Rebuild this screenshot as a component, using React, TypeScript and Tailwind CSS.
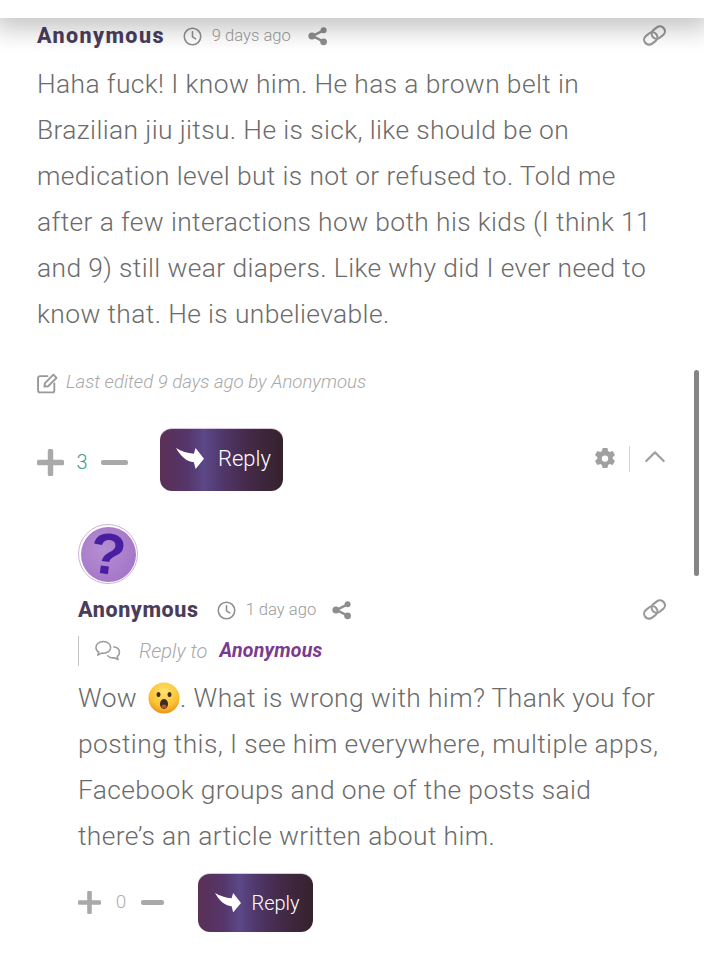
import React from "react";

const Clock = ({ s = 19 }: { s?: number }) => (
  <svg width={s} height={s} viewBox="0 0 18 18" fill="none" stroke="#8f8f8f" strokeWidth="1.5" strokeLinecap="round">
    <circle cx="9" cy="9" r="7.8" />
    <path d="M9 4.6V9.4L12 11.2" />
  </svg>
);

const Share = ({ s = 20 }: { s?: number }) => (
  <svg width={s} height={s} viewBox="0 0 20 20" fill="#8e8e8e" stroke="#8e8e8e" strokeWidth="2.4">
    <circle cx="15.6" cy="4.2" r="3" stroke="none" />
    <circle cx="4" cy="10" r="3.6" stroke="none" />
    <circle cx="15.6" cy="15.8" r="3.4" stroke="none" />
    <path d="M15 4.6L4.6 10L15 15.4" fill="none" />
  </svg>
);

const LinkIcon = () => (
  <svg width="27" height="27" viewBox="0 0 24 24" fill="none" stroke="#999999" strokeWidth="1.9" strokeLinecap="round" className="-mr-[1px] mb-[2px]">
    <g transform="rotate(-38 12 12)">
      <rect x="1.5" y="7.6" width="12.5" height="8.8" rx="4.4" />
      <rect x="10" y="7.6" width="12.5" height="8.8" rx="4.4" />
    </g>
  </svg>
);

const Arrow = ({ w = 28 }: { w?: number }) => (
  <svg width={w} height={(w * 62) / 83} viewBox="0 0 83 62" fill="#ffffff">
    <path d="M0 0C16 9 34 16 53 17L58 0L83 32L58 62L53 42C32 42 12 22 0 0Z" />
  </svg>
);

const ReplyButton = ({ big }: { big?: boolean }) => (
  <button
    className={
      big
        ? "flex h-[63px] w-[123px] items-center justify-center gap-[14px] rounded-[12px] border-t border-[#d8c6dc] bg-[linear-gradient(90deg,#5a3055_0%,#55356a_22%,#5c4888_36%,#4f3668_52%,#442a48_72%,#34222c_100%)] pb-[3px] pl-[4px] text-[22px] font-light text-white"
        : "flex h-[59px] w-[115px] items-center justify-center gap-[10px] rounded-[12px] border-t border-[#d8c6dc] bg-[linear-gradient(90deg,#5a3055_0%,#55356a_22%,#5c4888_36%,#4f3668_52%,#442a48_72%,#34222c_100%)] pb-[1px] pl-[4px] text-[20px] font-light text-white"
    }
  >
    <Arrow w={big ? 28 : 26} />
    <span>Reply</span>
  </button>
);

const Vote = ({ n, teal, small }: { n: string; teal?: boolean; small?: boolean }) => (
  <div className={small ? "flex items-center gap-[13px]" : "mt-[5px] flex items-center gap-[11px]"}>
    <svg width={small ? 23 : 27} height={small ? 23 : 27} viewBox="0 0 27 27" fill="#a9a9a9">
      <rect x="0" y="10.8" width="27" height="5.4" rx="1.5" />
      <rect x="10.8" y="0" width="5.4" height="27" rx="1.5" />
    </svg>
    <span className={`${small ? "w-[14px] text-[19px]" : "w-[14px] text-[20px]"} text-center font-light ${teal ? "text-[#3f9c8e]" : "text-[#b0b0b0]"}`}>
      {n}
    </span>
    <div className={`${small ? "h-[5px] w-[23px]" : "ml-[1px] h-[5px] w-[27px]"} rounded-[2px] bg-[#a9a9a9]`} />
  </div>
);

const Meta = ({ time, small }: { time: string; small?: boolean }) => (
  <div className="flex items-center">
    <span className={`text-[21.5px] font-extrabold text-[#4a3d5c] ${small ? "tracking-[0.6px]" : "tracking-[1.4px]"}`}>Anonymous</span>
    <span className="ml-[18px]">
      <Clock />
    </span>
    <span className="ml-[10px] text-[16.6px] font-light text-[#9b9b9b]">{time}</span>
    <span className={small ? "ml-[16px]" : "ml-[17px]"}>
      <Share />
    </span>
  </div>
);

const Gear = () => (
  <svg width="24" height="24" viewBox="0 0 24 24" fill="#a0a0a0">
    <path
      fillRule="evenodd"
      d="M9.6 1h4.8l.7 3.1 1.5.9 3-1 2.4 4.1-2.3 2.2v1.4l2.3 2.2-2.4 4.1-3-1-1.5.9-.7 3.1H9.6l-.7-3.1-1.5-.9-3 1L2 13.9l2.3-2.2v-1.4L2 8.1l2.4-4.1 3 1 1.5-.9L9.6 1ZM12 8.4a3.2 3.2 0 1 0 0 6.4 3.2 3.2 0 0 0 0-6.4Z"
    />
  </svg>
);

const Emoji = () => (
  <svg width="32" height="32" viewBox="0 0 32 32" className="ml-[11px] inline-block align-[-7px]">
    <defs>
      <radialGradient id="face" cx="50%" cy="30%" r="72%">
        <stop offset="0%" stopColor="#ffe26e" />
        <stop offset="65%" stopColor="#fbc233" />
        <stop offset="100%" stopColor="#ea8f18" />
      </radialGradient>
    </defs>
    <circle cx="16" cy="16" r="15.5" fill="url(#face)" />
    <ellipse cx="10.5" cy="12.5" rx="2" ry="2.6" fill="#3e2a1e" />
    <ellipse cx="21.5" cy="12.5" rx="2" ry="2.6" fill="#3e2a1e" />
    <ellipse cx="16" cy="22" rx="4" ry="5" fill="#3e2a1e" />
    <ellipse cx="16" cy="24.4" rx="2.6" ry="1.9" fill="#b4533a" />
  </svg>
);

export default function App() {
  return (
    <div className="relative h-[960px] w-[704px] overflow-hidden bg-white font-['Roboto',sans-serif]">
      <div className="absolute left-0 right-0 top-0 h-[18px] bg-white shadow-[0_4px_26px_6px_rgba(0,0,0,0.25)]" />
      <div className="absolute right-[5px] top-[370px] h-[206px] w-[5px] rounded-[3px] bg-[#858585]" />

      <div className="px-[37px] pt-[20px]">
        <div className="flex h-[32px] items-center justify-between">
          <Meta time="9 days ago" />
          <LinkIcon />
        </div>
        <p className="mt-[9px] w-[630px] text-[26.4px] font-light leading-[46px] tracking-[0.38px] text-[#6b6b6b]">
          Haha fuck! I know him. He has a brown belt in Brazilian jiu jitsu. He is sick, like should be on medication level but is not or refused to. Told me after a few interactions how both his kids (I think 11 and 9) still wear diapers. Like why did I ever need to know that. He is unbelievable.
        </p>
        <div className="mt-[33px] flex h-[26px] items-center gap-[8px] text-[18.6px] font-light italic text-[#a8a8a8]">
          <svg width="21" height="21" viewBox="0 0 20 20" fill="none" stroke="#999999" strokeWidth="1.8" strokeLinecap="round" strokeLinejoin="round">
            <path d="M10 3H3C1.8 3 1 3.8 1 5v11.6c0 1.2.8 1.9 2 1.9h11.6c1.2 0 1.9-.7 1.9-1.9V10" />
            <path d="M7.6 9.6 15.6 1.6 18.6 4.6 10.6 12.6 7 13Z" />
          </svg>
          <span>Last edited 9 days ago by Anonymous</span>
        </div>
        <div className="mt-[32px] flex items-center justify-between">
          <div className="flex items-center gap-[32px]">
            <Vote n="3" teal />
            <ReplyButton big />
          </div>
          <div className="mb-[2px] flex items-center">
            <Gear />
            <div className="ml-[12px] h-[26px] w-px bg-[#d4d4d4]" />
            <svg width="22" height="13" viewBox="0 0 24 14" fill="none" stroke="#a0a0a0" strokeWidth="2.4" strokeLinecap="round" strokeLinejoin="round" className="ml-[14px] mb-[4px] mr-[1px]">
              <path d="M2.5 12 12 2.5 21.5 12" />
            </svg>
          </div>
        </div>

        <div className="ml-[41px] mt-[33px]">
          <div className="flex h-[60px] w-[60px] items-center justify-center rounded-full border border-[#cdb2dc] bg-white">
            <div className="flex h-[55px] w-[55px] items-center justify-center rounded-full bg-[radial-gradient(circle_at_40%_40%,#b48ed2,#a06fc4)] font-['Liberation_Sans',sans-serif] text-[58px] font-bold leading-none text-[#4a1ea0]">
              <span className="rotate-[8deg]">?</span>
            </div>
          </div>
          <div className="mt-[10px] flex h-[32px] items-center justify-between">
            <Meta time="1 day ago" small />
            <LinkIcon />
          </div>
          <div className="mt-[10px] flex h-[30px] items-center border-l border-[#c4c4c4] pl-[15px] text-[20px] italic">
            <svg width="28" height="23" viewBox="0 0 26 22" fill="none" stroke="#9b9b9b" strokeWidth="1.5" strokeLinejoin="round">
              <path d="M8.5 1.5c-4 0-7 2.4-7 5.6 0 1.8 1 3.4 2.6 4.4l-.8 3 3.6-2c.5.1 1 .1 1.6.1 4 0 7-2.3 7-5.5s-3-5.6-7-5.6Z" />
              <path d="M18 6.5c3.6.5 6 2.6 6 5.4 0 1.6-.9 3-2.2 3.9l.7 3-3.4-1.8c-2.7.4-5.4-.5-6.8-2.3" />
            </svg>
            <span className="ml-[17px] font-light text-[#a8a8a8]">Reply to</span>
            <span className="ml-[12px] text-[19.5px] font-bold tracking-[0.2px] text-[#7a3a92]">Anonymous</span>
          </div>
          <p className="mt-[9px] w-[589px] text-[26.4px] font-light leading-[46px] tracking-[0.38px] text-[#6b6b6b]">
            Wow<Emoji />. What is wrong with him? Thank you for posting this, I see him everywhere, multiple apps, Facebook groups and one of the posts said there’s an article written about him.
          </p>
          <div className="mt-[14px] flex items-center gap-[34px]">
            <Vote n="0" small />
            <ReplyButton />
          </div>
        </div>
      </div>
    </div>
  );
}
